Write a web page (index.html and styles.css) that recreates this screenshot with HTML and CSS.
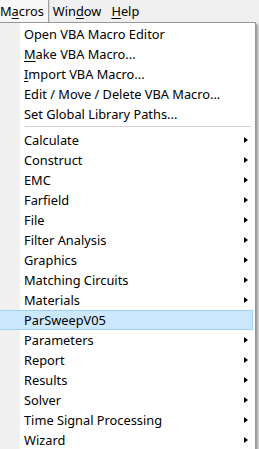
FILE: index.html
```html
<!DOCTYPE html>
<html lang="en">

<head>
    <meta charset="UTF-8">
    <title>Macros menu</title>
    <link rel="stylesheet" href="styles.css">
</head>

<body>
    <div class="menubar">
        <div class="top-item open">M<u>a</u>cros</div>
        <div class="top-item">Win<u>d</u>ow</div>
        <div class="top-item"><u>H</u>elp</div>
    </div>

    <div class="popup">
        <div class="item">Open VBA Macro Editor</div>
        <div class="item"><u>M</u>ake VBA Macro...</div>
        <div class="item"><u>I</u>mport VBA Macro...</div>
        <div class="item">Edit / Move / Delete VBA Macro...</div>
        <div class="item">Set Global Library Paths...</div>
        <div class="sep"></div>
        <div class="item sub">Calculate</div>
        <div class="item sub">Construct</div>
        <div class="item sub">EMC</div>
        <div class="item sub">Farfield</div>
        <div class="item sub">File</div>
        <div class="item sub">Filter Analysis</div>
        <div class="item sub">Graphics</div>
        <div class="item sub">Matching Circuits</div>
        <div class="item sub">Materials</div>
        <div class="item active">ParSweepV05</div>
        <div class="item sub">Parameters</div>
        <div class="item sub">Report</div>
        <div class="item sub">Results</div>
        <div class="item sub">Solver</div>
        <div class="item sub">Time Signal Processing</div>
        <div class="item sub">Wizard</div>
    </div>
</body>

</html>
```

FILE: styles.css
```css
html,
body {
    margin: 0;
    height: 100vh;
    overflow: hidden;
    background: #f0f0f0;
    font-family: "Noto Sans", "Open Sans", sans-serif;
    font-size: 12.8px;
    color: #000;
}

u {
    text-decoration-thickness: 1px;
    text-underline-offset: 2px;
}

.menubar {
    display: flex;
    height: 22px;
    background: #f0f0f0;
}

.top-item {
    display: flex;
    align-items: center;
    padding: 0 6px 0 0;
    margin-right: 4px;
    line-height: 22px;
}

.top-item.open {
    background: #f7f7f7;
    border-right: 1px solid #a0a0a0;
    box-shadow: 1px 0 0 #dadada;
    padding-right: 4px;
    margin-right: 4px;
}

/* the drop-down lies over the window */
.popup {
    position: absolute;
    top: 22px;
    left: -4px;
    width: 258px;
    padding: 1px 0 2px;
    border: 1px solid #979797;
    background: linear-gradient(to right, #f0f0f0 23px, #fff 23px);
    box-shadow: 2px 2px 2px rgba(0, 0, 0, 0.35);
}

.item {
    position: relative;
    height: 20px;
    line-height: 19px;
    padding-left: 26px;
    border: 1px solid transparent;
    box-sizing: border-box;
    margin: 0 2px 0 0;
    white-space: nowrap;
}

.item.active {
    background: #cce8ff;
    border-color: #99d1ff;
}

.sub::after {
    content: "";
    position: absolute;
    top: 6px;
    left: 246px;
    border-left: 4px solid #000;
    border-top: 3.5px solid transparent;
    border-bottom: 3.5px solid transparent;
}

.sep {
    height: 1px;
    margin: 2px 4px 3px 28px;
    background: #d0d0d0;
}
```
